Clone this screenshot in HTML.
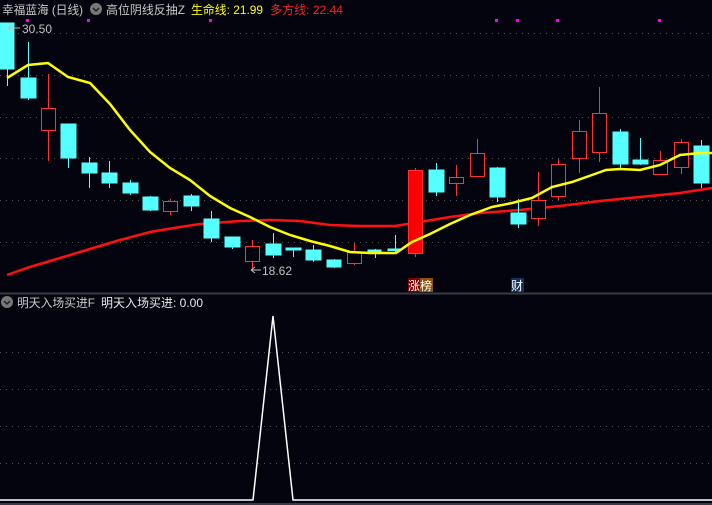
<!DOCTYPE html>
<html><head><meta charset="utf-8"><style>
html,body{margin:0;padding:0;background:#04040e;width:712px;height:505px;overflow:hidden}
svg{display:block}
text{font-family:"Liberation Sans","Noto Sans CJK SC",sans-serif}
</style></head><body>
<svg width="712" height="505" viewBox="0 0 712 505" xmlns="http://www.w3.org/2000/svg">
<rect width="712" height="505" fill="#04040e"/>
<g stroke="#555" stroke-width="1" stroke-dasharray="1,5">
<line x1="0" y1="33.5" x2="712" y2="33.5"/>
<line x1="0" y1="75.5" x2="712" y2="75.5"/>
<line x1="0" y1="117.5" x2="712" y2="117.5"/>
<line x1="0" y1="158.5" x2="712" y2="158.5"/>
<line x1="0" y1="200.5" x2="712" y2="200.5"/>
<line x1="0" y1="242.5" x2="712" y2="242.5"/>
<line x1="0" y1="352.5" x2="712" y2="352.5"/>
<line x1="0" y1="389.5" x2="712" y2="389.5"/>
<line x1="0" y1="426.5" x2="712" y2="426.5"/>
<line x1="0" y1="463.5" x2="712" y2="463.5"/>
</g>
<line x1="0" y1="293.5" x2="712" y2="293.5" stroke="#3a3a44" stroke-width="2"/>
<line x1="0" y1="504" x2="712" y2="504" stroke="#3a3a44" stroke-width="2"/>
<polyline fill="none" stroke="#ff1010" stroke-width="2.5" points="7,275 30,267 60,258 90,249 120,240 150,232 180,227 200,224 240,221 270,220 300,221 330,225 360,226 395,226 420,222 450,217 480,213 520,210 560,206 600,201 640,197 680,193 712,188"/>
<g stroke="#55ffff" stroke-width="1" fill="#55ffff">
<line x1="7.5" y1="23" x2="7.5" y2="86"/><rect x="0" y="23" width="14" height="46"/>
<line x1="28.5" y1="42" x2="28.5" y2="100"/><rect x="21" y="78" width="15" height="20"/>
<line x1="68.5" y1="124" x2="68.5" y2="168"/><rect x="61" y="124" width="15" height="34"/>
<line x1="89.5" y1="157" x2="89.5" y2="188"/><rect x="82" y="163" width="15" height="10"/>
<line x1="109.5" y1="161" x2="109.5" y2="188"/><rect x="102" y="173" width="15" height="10"/>
<line x1="130.5" y1="180" x2="130.5" y2="195"/><rect x="123" y="183" width="15" height="10"/>
<line x1="150.5" y1="196" x2="150.5" y2="211"/><rect x="143" y="197" width="15" height="13"/>
<line x1="191.5" y1="194" x2="191.5" y2="211"/><rect x="184" y="196" width="15" height="10"/>
<line x1="211.5" y1="211" x2="211.5" y2="242"/><rect x="204" y="219" width="15" height="19"/>
<line x1="232.5" y1="237" x2="232.5" y2="249"/><rect x="225" y="237" width="15" height="10"/>
<line x1="273.5" y1="233" x2="273.5" y2="258"/><rect x="266" y="244" width="15" height="11"/>
<line x1="293.5" y1="249" x2="293.5" y2="257"/><rect x="286" y="248" width="15" height="2"/>
<line x1="313.5" y1="245" x2="313.5" y2="262"/><rect x="306" y="250" width="15" height="10"/>
<line x1="334.5" y1="259" x2="334.5" y2="268"/><rect x="327" y="260" width="14" height="7"/>
<line x1="375.5" y1="249" x2="375.5" y2="258"/><rect x="368" y="250" width="13" height="1.5"/>
<line x1="395.5" y1="235" x2="395.5" y2="253"/><rect x="388" y="249" width="13" height="1.5"/>
<line x1="436.5" y1="163" x2="436.5" y2="196"/><rect x="429" y="170" width="15" height="22"/>
<line x1="497.5" y1="167" x2="497.5" y2="202"/><rect x="490" y="168" width="15" height="29"/>
<line x1="518.5" y1="199" x2="518.5" y2="228"/><rect x="511" y="213" width="15" height="11"/>
<line x1="620.5" y1="129" x2="620.5" y2="168"/><rect x="613" y="132" width="15" height="32"/>
<line x1="640.5" y1="138" x2="640.5" y2="165"/><rect x="633" y="160" width="15" height="4"/>
<line x1="701.5" y1="140" x2="701.5" y2="188"/><rect x="694" y="146" width="15" height="37"/>
</g>
<g stroke="#ff3333" stroke-width="1" fill="#04040e">
<line x1="48.5" y1="74" x2="48.5" y2="161"/><rect x="41.5" y="108.5" width="14" height="22"/>
<line x1="170.5" y1="199" x2="170.5" y2="215"/><rect x="163.5" y="201.5" width="14" height="10"/>
<line x1="252.5" y1="240" x2="252.5" y2="270"/><rect x="245.5" y="246.5" width="14" height="15"/>
<line x1="354.5" y1="243" x2="354.5" y2="265"/><rect x="347.5" y="252.5" width="14" height="11"/>
<line x1="456.5" y1="165" x2="456.5" y2="196"/><rect x="449.5" y="177.5" width="14" height="6"/>
<line x1="477.5" y1="139" x2="477.5" y2="176"/><rect x="470.5" y="153.5" width="14" height="23"/>
<line x1="538.5" y1="172" x2="538.5" y2="226"/><rect x="531.5" y="200.5" width="14" height="18"/>
<line x1="558.5" y1="159" x2="558.5" y2="200"/><rect x="551.5" y="164.5" width="14" height="32"/>
<line x1="579.5" y1="120" x2="579.5" y2="173"/><rect x="572.5" y="131.5" width="14" height="27"/>
<line x1="599.5" y1="87" x2="599.5" y2="162"/><rect x="592.5" y="113.5" width="14" height="39"/>
<line x1="660.5" y1="151" x2="660.5" y2="174"/><rect x="653.5" y="160.5" width="14" height="14"/>
<line x1="681.5" y1="139" x2="681.5" y2="174"/><rect x="674.5" y="142.5" width="14" height="25"/>
</g>
<line x1="415.5" y1="168" x2="415.5" y2="257" stroke="#ff3333"/>
<rect x="408.5" y="170.5" width="14" height="83" fill="#ff0000" stroke="#ff3333"/>
<polyline fill="none" stroke="#ffff00" stroke-width="2.5" points="7,78 28,65 48,63 68,77 90,83 110,104 130,130 150,152 170,168 190,180 210,196 230,208 250,217 270,227 290,235 310,241 330,246 350,252 370,253 396,253 412,242 430,234 450,224 470,215 492,207 512,203 532,198 552,187 572,182 592,175 606,170 620,169 640,170 660,165 680,155 700,153 712,153"/>
<g fill="#ff00ff">
<rect x="26" y="19" width="3" height="3"/><rect x="87" y="19" width="3" height="3"/><rect x="209" y="19" width="3" height="3"/>
<rect x="495" y="19" width="3" height="3"/><rect x="516" y="19" width="3" height="3"/><rect x="556" y="19" width="3" height="3"/><rect x="658" y="19" width="3" height="3"/>
</g>
<path d="M8 28 L20 28 M8 28 L12 25 M8 28 L12 31" stroke="#c0c0c0" stroke-width="1" fill="none"/>
<text x="22" y="33" font-size="12" fill="#c0c0c0">30.50</text>
<path d="M251 270 L261 270 M251 270 L255 267 M251 270 L255 273" stroke="#c0c0c0" stroke-width="1" fill="none"/>
<text x="262" y="275" font-size="12" fill="#c0c0c0">18.62</text>
<rect x="408" y="278" width="12" height="14" fill="#800000"/><rect x="420" y="278" width="13" height="14" fill="#8a5010"/>
<text x="408" y="290" font-size="12" fill="#fff">涨榜</text>
<rect x="511" y="278" width="13" height="14" fill="#103060"/>
<text x="511" y="290" font-size="12" fill="#fff">财</text>
<rect x="0" y="0" width="712" height="18" fill="#04040e"/>
<text x="2" y="14" font-size="12" fill="#c8c8c8" textLength="81" lengthAdjust="spacingAndGlyphs">幸福蓝海 (日线)</text>
<circle cx="96" cy="9" r="6" fill="#777"/><path d="M93 8 L96 11 L99 8" stroke="#222" stroke-width="1.5" fill="none"/>
<text x="106" y="14" font-size="12" fill="#c8c8c8" textLength="79" lengthAdjust="spacingAndGlyphs">高位阴线反抽Z</text>
<text x="191" y="14" font-size="12" fill="#ffff00" textLength="72" lengthAdjust="spacingAndGlyphs">生命线: 21.99</text>
<text x="270" y="14" font-size="12" fill="#ff2020" textLength="73" lengthAdjust="spacingAndGlyphs">多方线: 22.44</text>
<circle cx="7" cy="302" r="6" fill="#777"/><path d="M4 301 L7 304 L10 301" stroke="#222" stroke-width="1.5" fill="none"/>
<text x="17" y="307" font-size="12" fill="#c8c8c8" textLength="78" lengthAdjust="spacingAndGlyphs">明天入场买进F</text>
<text x="101" y="307" font-size="12" fill="#e8e8e8" textLength="102" lengthAdjust="spacingAndGlyphs">明天入场买进: 0.00</text>
<polyline fill="none" stroke="#ffffff" stroke-width="1.5" points="0,500 253,500 273,316 293,500 712,500"/>
</svg>
</body></html>
